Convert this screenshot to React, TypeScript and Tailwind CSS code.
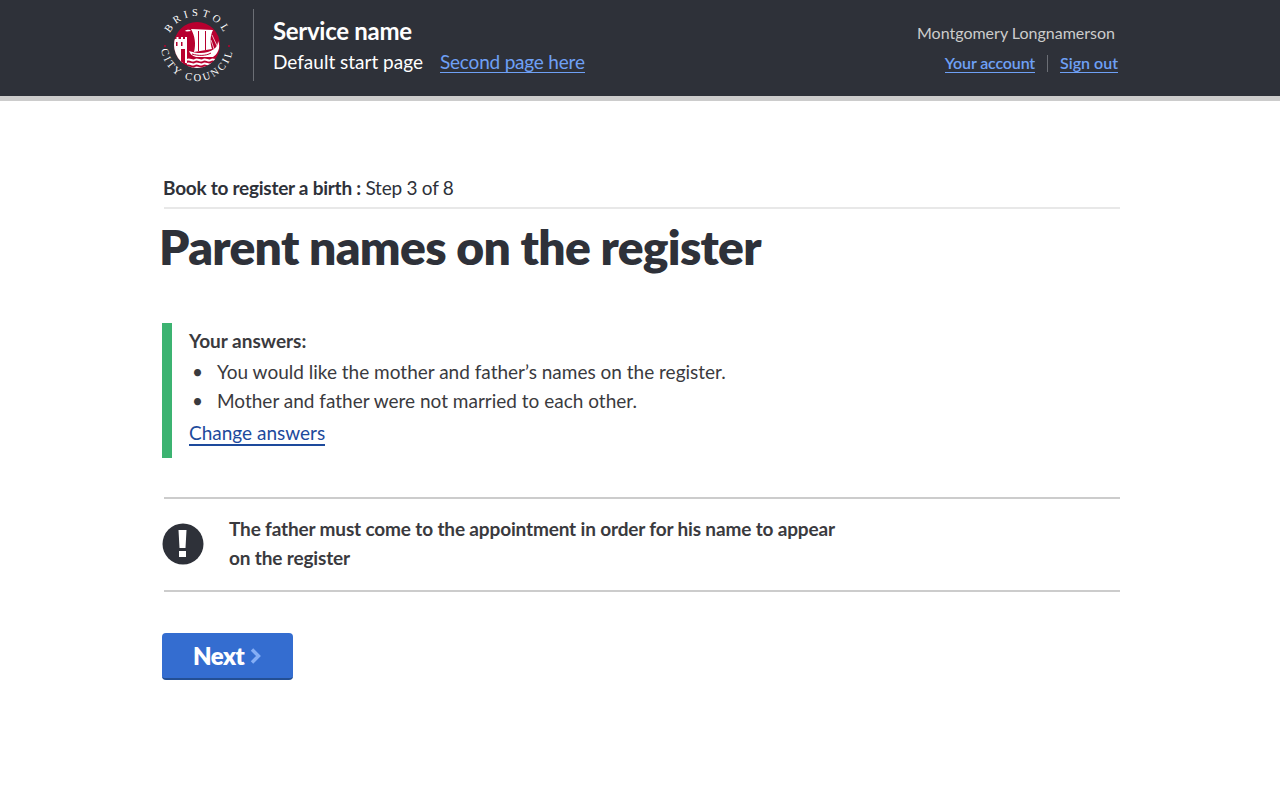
function Logo() {
  return (
    <svg width="76" height="76" viewBox="0 0 76 76" className="shrink-0">
      <defs>
        <path id="arcTop" d="M8 39 A30 30 0 0 1 68 39" />
        <path id="arcBottom" d="M2 38 A36 36 0 0 0 74 38" />
        <clipPath id="seal">
          <circle cx="38" cy="38" r="23" />
        </clipPath>
      </defs>
      <text fill="#fff" fontSize="10.5" fontFamily="Liberation Serif, serif" letterSpacing="3.8">
        <textPath href="#arcTop" startOffset="14%">BRISTOL</textPath>
      </text>
      <text fill="#fff" fontSize="10.5" fontFamily="Liberation Serif, serif" letterSpacing="2.5">
        <textPath href="#arcBottom" startOffset="4%">CITY COUNCIL</textPath>
      </text>
      <circle cx="6" cy="39" r="1" fill="#b8002f" />
      <circle cx="70" cy="39" r="1" fill="#b8002f" />
      <circle cx="38" cy="38" r="23" fill="#b8002f" />
      <g clipPath="url(#seal)">
        <path d="M15 32h2.5v-2h2v2h2.5v-2h2v2h2v-2h2v26h-13z" fill="#fff" />
        <path d="M17 35h1.5v4h-1.5zM22 35h1.5v4h-1.5z" fill="#b8002f" />
        <path d="M22 42h4v20h-4z" fill="#b8002f" />
        <path d="M32 22l22 1c-3 6-3 13-1 19l-18 3c2-8 1-16-3-23z" fill="#fff" />
        <path d="M39 24h1v20h-1zM46 24h1v19h-1z" fill="#b8002f" />
        <path d="M53 28l6 13M52 33l3 9" stroke="#fff" strokeWidth="0.7" fill="none" />
        <path d="M30 44c8 3 19 3 25-2 3-2 4-5 4-8 3 6 0 13-5 16H37c-4-1-6-3-7-6z" fill="#fff" />
        <path d="M33 47c6 2 14 2 19-1" stroke="#b8002f" strokeWidth="1" fill="none" />
        <path d="M28 53c3-2 5 2 8 0s5 2 8 0 5 2 8 0 5 2 8 0M28 57c3-2 5 2 8 0s5 2 8 0 5 2 8 0 5 2 8 0M28 61c3-2 5 2 8 0s5 2 8 0 5 2 8 0" stroke="#fff" strokeWidth="2" fill="none" />
        <path d="M26 24c3-2 5-1 6 0-2 0-4 1-6 0z" fill="#fff" />
      </g>
    </svg>
  )
}

export default function App() {
  return (
    <div className="min-h-[799px] bg-white font-['Lato',sans-serif] text-[#2e3139]">
      <header className="h-[101px] border-b-[5px] border-[#cccccc] bg-[#2e3139]">
        <div className="ml-[159px] flex h-full w-[959px] items-start">
          <div className="pt-[7px]">
            <Logo />
          </div>
          <div className="ml-[18px] mt-[9px] h-[72px] border-l border-[#6b6e75] pl-[19px]">
            <div className="mt-[6px] text-[24px] font-bold leading-[32px] tracking-[-0.3px] text-white">Service name</div>
            <div className="mt-[1px] flex items-baseline text-[19px] leading-[27px] text-white">
              <span>Default start page</span>
              <a className="ml-[17px] border-b border-[#6ea0f5] leading-[21px] tracking-[-0.2px] text-[#6ea0f5]">Second page here</a>
            </div>
          </div>
          <div className="ml-auto mt-[22px] flex flex-col items-end">
            <div className="mr-[3px] text-[16px] leading-[22px] text-[#cccccc]">Montgomery Longnamerson</div>
            <div className="mt-[9px] flex items-center text-[16px] font-semibold leading-[19px] text-[#6ea0f5]">
              <a className="border-b border-[#6ea0f5] tracking-[-0.15px]">Your account</a>
              <span className="mx-[12px] h-[17px] border-l border-[#6b6e75]" />
              <a className="border-b border-[#6ea0f5]">Sign out</a>
            </div>
          </div>
        </div>
      </header>

      <main className="ml-[162px] w-[958px]">
        <div className="ml-[2px] mt-[74px] border-b-2 border-[#e8e8e8] pb-[6px] text-[19px] leading-[26px] tracking-[-0.25px] text-[#2e3139]">
          <div className="-ml-[1px]"><span className="font-bold">Book to register a birth :</span> Step 3 of 8</div>
        </div>
        <h1 className="-ml-[3px] mt-[8px] text-[48px] font-extrabold leading-[60px] tracking-[-0.7px]">Parent names on the register</h1>

        <section className="mt-[46px] flex h-[135px] border-l-[10px] border-[#3cb371] pl-[17px] text-[#3a3a3e]">
          <div className="pt-[4px]">
            <div className="text-[19px] font-bold leading-[27px]">Your answers:</div>
            <ul className="mt-[3px] text-[19px] leading-[29px]">
              <li className="flex"><span className="w-[28px] pl-[3px]">•</span>You would like the mother and father’s names on the register.</li>
              <li className="flex"><span className="w-[28px] pl-[3px]">•</span>Mother and father were not married to each other.</li>
            </ul>
            <a className="mt-[6px] inline-block border-b-2 border-[#1d4a9c] text-[19px] leading-[23px] text-[#1d4a9c]">Change answers</a>
          </div>
        </section>

        <section className="ml-[2px] mt-[39px] flex h-[95px] items-start border-y-2 border-[#cccccc]">
          <svg width="42" height="42" viewBox="0 0 42 42" className="-ml-[2px] mt-[24px] shrink-0">
            <circle cx="21" cy="21" r="20.5" fill="#2e3139" />
            <path d="M16.5 7h8l-1 18h-6z M17 28h7v6h-7z" fill="#fff" />
          </svg>
          <p className="ml-[25px] mt-[15px] w-[620px] text-[19px] font-bold leading-[29px] tracking-[-0.15px] text-[#3a3a3e]">
            The father must come to the appointment in order for his name to appear on the register
          </p>
        </section>

        <button className="mt-[41px] flex h-[47px] w-[131px] items-center rounded-[4px] border-b-2 border-[#234f94] bg-[#346dd0] pl-[31px] text-[24px] font-extrabold tracking-[-0.5px] text-white">
          Next
          <svg width="14" height="18" viewBox="0 0 14 18" className="ml-[5px]">
            <path d="M3 2.5l6.5 6.5-6.5 6.5" fill="none" stroke="#85aef5" strokeWidth="3.4" />
          </svg>
        </button>
      </main>
    </div>
  )
}
